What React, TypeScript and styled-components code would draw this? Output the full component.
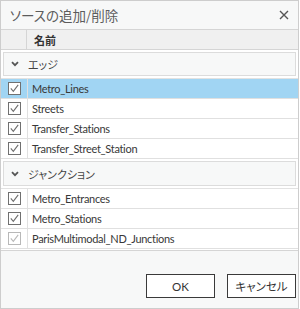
import { FC } from 'react';
import { styled, createGlobalStyle } from 'styled-components';

interface ISourceItem {
  name: string;
  checked: boolean;
  disabled?: boolean;
  selected?: boolean;
}

interface ISourceGroup {
  title: string;
  items: ISourceItem[];
}

const groups: ISourceGroup[] = [
  {
    title: 'エッジ',
    items: [
      { name: 'Metro_Lines', checked: true, selected: true },
      { name: 'Streets', checked: true },
      { name: 'Transfer_Stations', checked: true },
      { name: 'Transfer_Street_Station', checked: true },
    ],
  },
  {
    title: 'ジャンクション',
    items: [
      { name: 'Metro_Entrances', checked: true },
      { name: 'Metro_Stations', checked: true },
      { name: 'ParisMultimodal_ND_Junctions', checked: true, disabled: true },
    ],
  },
];

const GlobalStyle = createGlobalStyle`
  body {
    margin: 0;
    background: #ffffff;
    font-family: Lato, "Noto Sans CJK JP", sans-serif;
    color: #333333;
  }
`;

const Dialog = styled.div`
  box-sizing: border-box;
  width: 299px;
  height: 309px;
  border: 1px solid #cdcdcd;
  background: #f7f8f8;
  display: flex;
  flex-direction: column;
`;

const TitleBar = styled.div`
  height: 28px;
  display: flex;
  align-items: center;
  justify-content: space-between;
  padding: 0 9px 0 9px;
`;

const Title = styled.h1`
  margin: 0;
  font-family: "Noto Sans CJK JP", sans-serif;
  font-feature-settings: 'palt';
  font-size: 13.5px;
  font-weight: 400;
  color: #5c5c5c;
`;

const CloseButton = styled.button`
  display: flex;
  padding: 0;
  border: none;
  background: none;
  cursor: pointer;
`;

const Grid = styled.div`
  height: 222px;
  box-sizing: border-box;
  border-top: 1px solid #d5d5d5;
  border-bottom: 1px solid #d5d5d5;
  background: #ffffff;
`;

const HeaderRow = styled.div`
  display: grid;
  grid-template-columns: 26px 1fr;
  height: 20px;
  box-sizing: border-box;
  border-bottom: 1px solid #d5d5d5;
  background: #f0f0f0;
`;

const HeaderCell = styled.div`
  display: flex;
  align-items: center;
  padding-left: 7px;
  font-family: "Noto Sans CJK JP", sans-serif;
  font-size: 11px;
  font-weight: 700;
  color: #333333;

  &:first-child {
    border-right: 1px solid #d5d5d5;
  }
`;

const GroupRow = styled.div<{ $first?: boolean }>`
  height: ${(p) => (p.$first ? '29px' : '30px')};
  box-sizing: border-box;
  padding: 2px 2px 2px 2px;
  border-bottom: 1px solid #e2e2e2;
`;

const GroupBox = styled.div`
  height: 100%;
  box-sizing: border-box;
  border: 1px solid #dcdcdc;
  background: #f7f8f8;
  display: flex;
  align-items: center;
  gap: 9px;
  padding-left: 7px;
  font-family: "Noto Sans CJK JP", sans-serif;
  font-feature-settings: 'palt';
  font-size: 11px;
  color: #444444;
`;

const Row = styled.div<{ $selected?: boolean }>`
  display: grid;
  grid-template-columns: 27px 1fr;
  height: 20px;
  box-sizing: border-box;
  border-bottom: 1px solid #e0e0e0;
  background: ${(p) => (p.$selected ? '#a1d5f3' : '#ffffff')};
`;

const CheckCell = styled.div`
  display: flex;
  align-items: center;
  padding-left: 7px;
  border-right: 1px solid #e0e0e0;
`;

const CheckBox = styled.span<{ $disabled?: boolean }>`
  box-sizing: border-box;
  width: 13px;
  height: 13px;
  border: 1px solid ${(p) => (p.$disabled ? '#b8b8b8' : '#707070')};
  background: #ffffff;
  display: flex;
  align-items: center;
  justify-content: center;
`;

const NameCell = styled.div`
  display: flex;
  align-items: center;
  padding-left: 4px;
  font-size: 11px;
  letter-spacing: -0.3px;
  color: #383838;
  white-space: nowrap;
`;

const Footer = styled.div`
  flex: 1;
  display: flex;
  justify-content: flex-end;
  align-items: flex-start;
  gap: 12px;
  padding: 23px 2px 0 0;
`;

const Button = styled.button`
  width: 69px;
  height: 24px;
  box-sizing: border-box;
  border: 1px solid #3a3a3a;
  background: #ffffff;
  font-family: Lato, "Noto Sans CJK JP", sans-serif;
  font-feature-settings: 'palt';
  font-size: 11.5px;
  color: #333333;
  padding: 0;
`;

const Check: FC<{ disabled?: boolean }> = ({ disabled }) => (
  <CheckBox $disabled={disabled}>
    <svg width="11" height="11" viewBox="0 0 11 11">
      <path
        d="M1.8 5.4 L4.3 8.3 L9.2 1.8"
        fill="none"
        stroke={disabled ? '#b8b8b8' : '#6e6e6e'}
        strokeWidth="1.1"
      />
    </svg>
  </CheckBox>
);

const Chevron = () => (
  <svg width="8" height="6" viewBox="0 0 8 6">
    <path d="M1 1.2 L4 4.2 L7 1.2" fill="none" stroke="#555555" strokeWidth="1.8" />
  </svg>
);

const App = () => {
  return (
    <>
      <GlobalStyle />
      <Dialog>
        <TitleBar>
          <Title>ソースの追加/削除</Title>
          <CloseButton aria-label="閉じる">
            <svg width="10" height="10" viewBox="0 0 10 10">
              <path d="M1 1 L9 9 M9 1 L1 9" stroke="#555555" strokeWidth="1.4" />
            </svg>
          </CloseButton>
        </TitleBar>
        <Grid>
          <HeaderRow>
            <HeaderCell />
            <HeaderCell>名前</HeaderCell>
          </HeaderRow>
          {groups.map((group, index) => (
            <div key={group.title}>
              <GroupRow $first={index === 0}>
                <GroupBox>
                  <Chevron />
                  {group.title}
                </GroupBox>
              </GroupRow>
              {group.items.map((item) => (
                <Row key={item.name} $selected={item.selected}>
                  <CheckCell>
                    <Check disabled={item.disabled} />
                  </CheckCell>
                  <NameCell>{item.name}</NameCell>
                </Row>
              ))}
            </div>
          ))}
        </Grid>
        <Footer>
          <Button>OK</Button>
          <Button>キャンセル</Button>
        </Footer>
      </Dialog>
    </>
  );
};

export default App;
